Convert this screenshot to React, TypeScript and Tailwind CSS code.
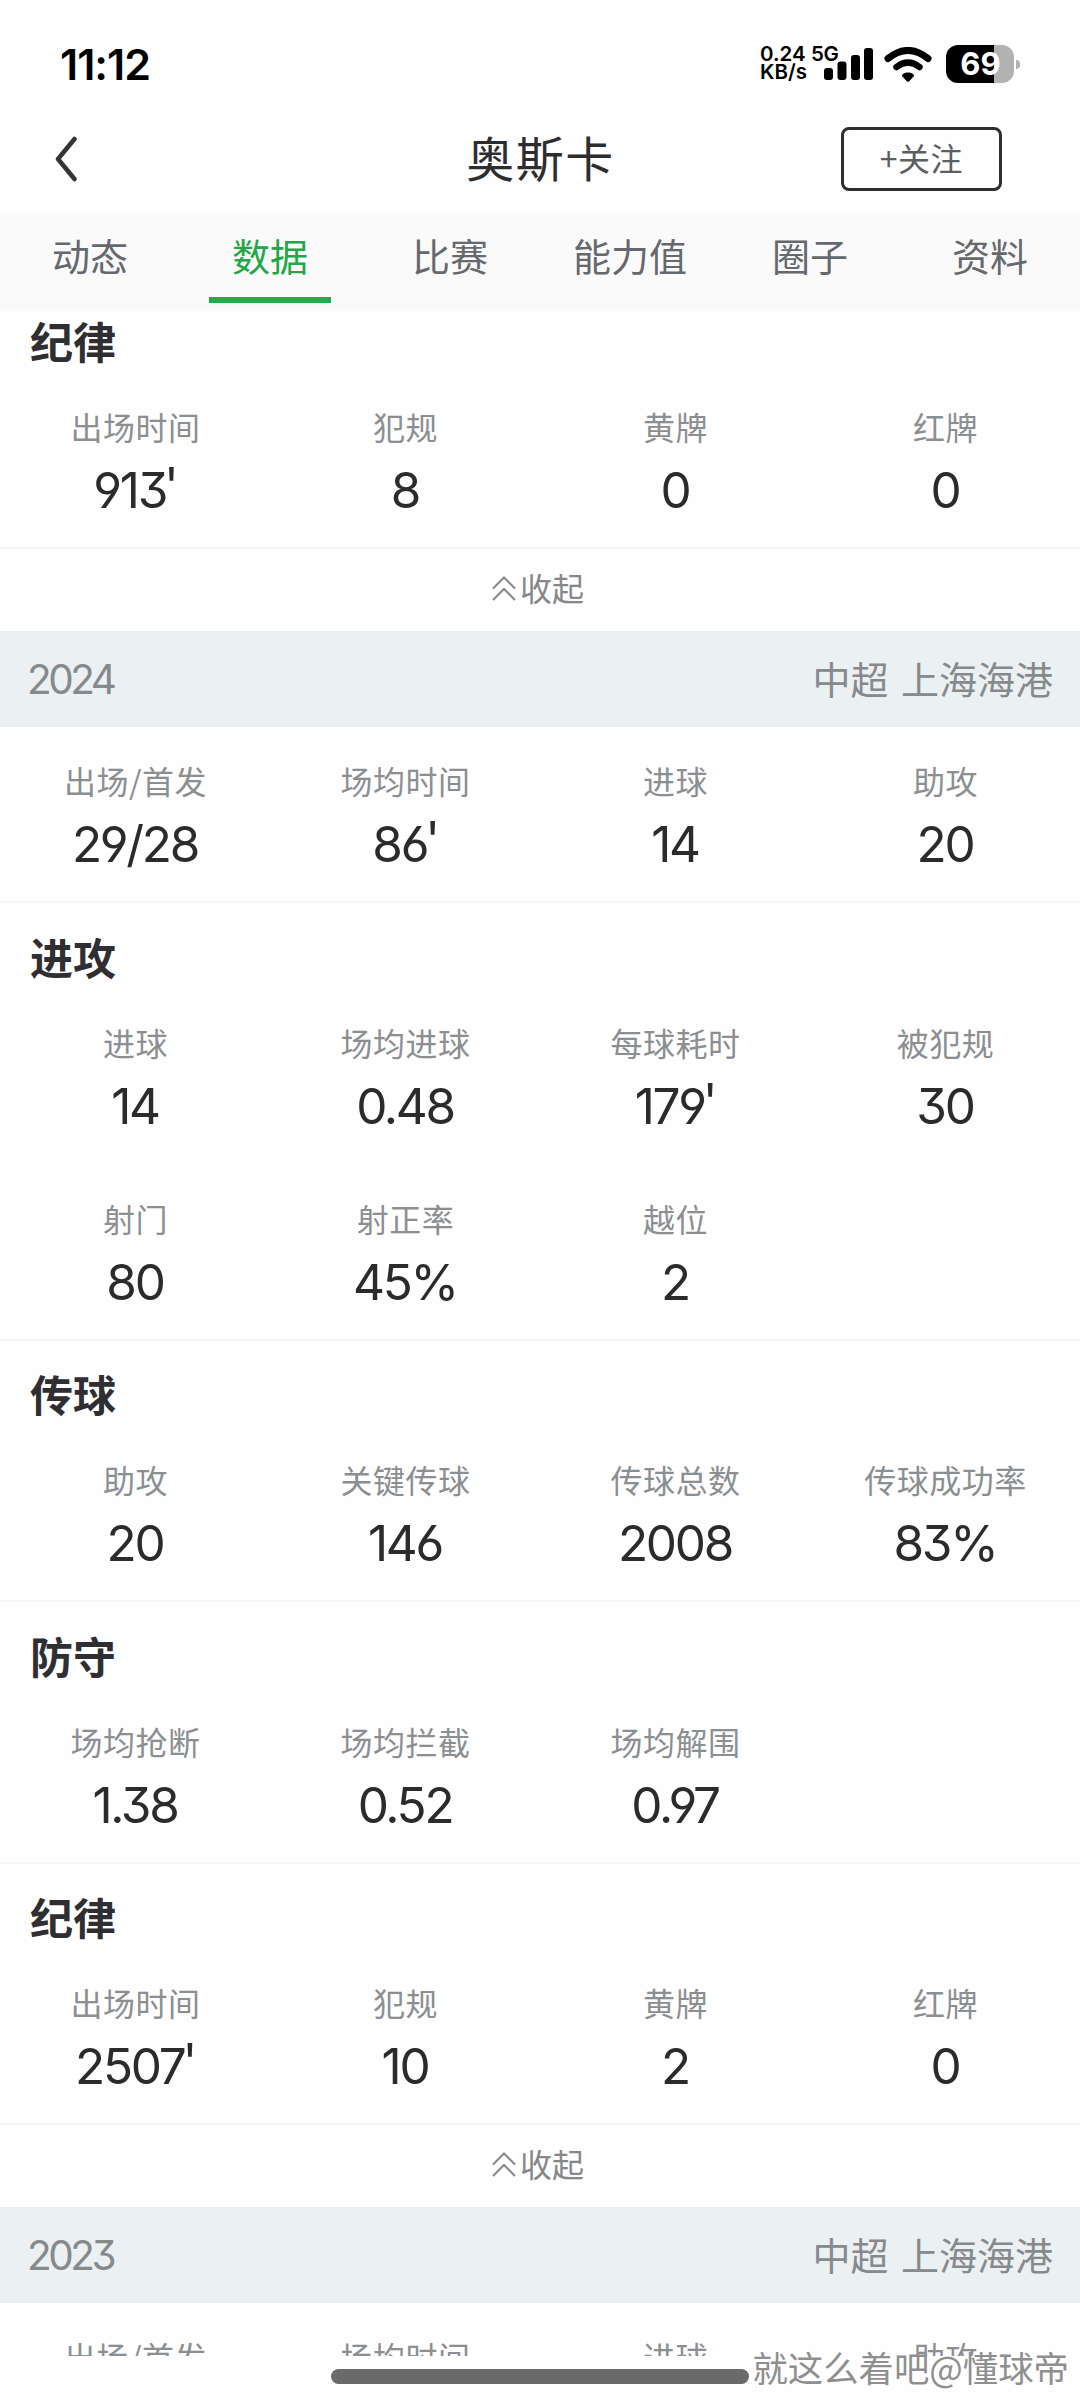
type Stat = { label: string; value: string };
type Section = { title?: string; stats: Stat[] };

const NUM =
  "font-['Inter','Noto_Sans_CJK_SC',sans-serif] [font-feature-settings:'cv03','cv04','cv09']";

const TABS = ["动态", "数据", "比赛", "能力值", "圈子", "资料"];

const PREVIOUS: Section = {
  title: "纪律",
  stats: [
    { label: "出场时间", value: "913'" },
    { label: "犯规", value: "8" },
    { label: "黄牌", value: "0" },
    { label: "红牌", value: "0" },
  ],
};

const SEASON_2024: Section[] = [
  {
    stats: [
      { label: "出场/首发", value: "29/28" },
      { label: "场均时间", value: "86'" },
      { label: "进球", value: "14" },
      { label: "助攻", value: "20" },
    ],
  },
  {
    title: "进攻",
    stats: [
      { label: "进球", value: "14" },
      { label: "场均进球", value: "0.48" },
      { label: "每球耗时", value: "179'" },
      { label: "被犯规", value: "30" },
      { label: "射门", value: "80" },
      { label: "射正率", value: "45%" },
      { label: "越位", value: "2" },
    ],
  },
  {
    title: "传球",
    stats: [
      { label: "助攻", value: "20" },
      { label: "关键传球", value: "146" },
      { label: "传球总数", value: "2008" },
      { label: "传球成功率", value: "83%" },
    ],
  },
  {
    title: "防守",
    stats: [
      { label: "场均抢断", value: "1.38" },
      { label: "场均拦截", value: "0.52" },
      { label: "场均解围", value: "0.97" },
    ],
  },
  {
    title: "纪律",
    stats: [
      { label: "出场时间", value: "2507'" },
      { label: "犯规", value: "10" },
      { label: "黄牌", value: "2" },
      { label: "红牌", value: "0" },
    ],
  },
];

const SEASON_2023: Section = {
  stats: [
    { label: "出场/首发", value: "" },
    { label: "场均时间", value: "" },
    { label: "进球", value: "" },
    { label: "助攻", value: "" },
  ],
};

function StatusBar() {
  return (
    <div className="flex h-[104px] items-start justify-between pl-[60px] pr-[60px] text-black">
      <span className={`${NUM} mt-[38px] text-[43px] leading-[52px] font-semibold tracking-[-1px]`}>11:12</span>
      <div className="mt-[45px] flex items-start">
        <div className="w-[51px] font-['Inter',sans-serif] text-[20.500px] leading-[18px] font-semibold">
          <div>0.24</div>
          <div>KB/s</div>
        </div>
        <span className="w-[28px] font-['Inter',sans-serif] text-[20.500px] leading-[18px] font-semibold tracking-[-0.500px]">5G</span>
        <svg className="-ml-[15px] mt-[3px]" width="49" height="32" viewBox="0 0 49 32">
          <rect x="0" y="20" width="9" height="12" rx="3" />
          <rect x="13.5" y="13.5" width="9" height="18.5" rx="3" />
          <rect x="27" y="7" width="9" height="25" rx="3" />
          <rect x="40" y="0" width="9" height="32" rx="3" />
        </svg>
        <svg className="ml-[11px] mt-[2px]" width="48" height="35" viewBox="0 0 48 35" fill="none" stroke="#000">
          <path d="M4 11.5 Q24 -4.5 44 11.5" strokeWidth="7" strokeLinecap="round" />
          <path d="M12.500 20 Q24 11 35.500 20" strokeWidth="6.500" strokeLinecap="round" />
          <path d="M24 25.500 C27.500 25.500 30.500 27.500 30 29 L25.500 34 Q24 35.500 22.500 34 L18 29 C17.500 27.500 20.500 25.500 24 25.500Z" fill="#000" stroke="none" />
        </svg>
        <div className="ml-[14px] flex h-[38px] w-[68px] items-center justify-center rounded-[12px] bg-[linear-gradient(to_right,#000_70%,#b2b2b2_70%)]">
          <span className="ml-[1px] font-['Inter',sans-serif] text-[31px] leading-[36px] font-bold text-white">69</span>
        </div>
        <div className="mt-[15px] ml-[2px] h-[9px] w-[4px] rounded-r-full bg-[#b2b2b2]" />
      </div>
    </div>
  );
}

function Header() {
  return (
    <div className="flex h-[109px] items-center justify-between pr-[78px] pl-[55px]">
      <svg className="mr-[163px]" width="22" height="46" viewBox="0 0 22 46" fill="none">
        <path d="M19.5 3 L3 23 L19.5 43" stroke="#333436" strokeWidth="4.500" strokeLinecap="round" strokeLinejoin="round" />
      </svg>
      <h1 className="pb-[5px] text-[48px] leading-[64px] tracking-[1.500px] text-[#2d2d30]">奥斯卡</h1>
      <button type="button" className="h-[64px] w-[161px] rounded-[8px] border-3 border-[#2e2e31] pb-[3px] text-[32px] leading-[54px] tracking-[0.500px] text-[#5b5e62]">
        +关注
      </button>
    </div>
  );
}

function Tabs() {
  return (
    <nav className="grid h-[98px] grid-cols-6 bg-[#fafafa] text-[38px] text-[#65686d]">
      {TABS.map((tab) => (
        <div key={tab} className="flex flex-col items-center justify-between pb-[8px]">
          <span className={tab === "数据" ? "mt-[14px] leading-[56px] text-[#22a647]" : "mt-[14px] leading-[56px]"}>{tab}</span>
          {tab === "数据" && <span className="h-[6px] w-[122px] bg-[#26a84b]" />}
        </div>
      ))}
    </nav>
  );
}

function StatValue({ value }: { value: string }) {
  const minutes = value.endsWith("'");
  return (
    <div className={`${NUM} mt-[13px] text-[49.500px] leading-[60px] font-[370] tracking-[-2.300px] text-[#2b2b2d]`}>
      {minutes ? value.slice(0, -1) : value}
      {minutes && <span className="-ml-[2px] align-[5px] leading-none">'</span>}
    </div>
  );
}

function StatSection({ section }: { section: Section }) {
  return (
    <section>
      {section.title && (
        <h2 className="h-[85.500px] pt-[28.500px] pl-[30px] text-[43px] leading-[48px] font-bold text-[#2f2f33]">
          {section.title}
        </h2>
      )}
      <div className="grid auto-rows-[176px] grid-cols-4 text-center">
        {section.stats.map((stat) => (
          <div key={stat.label}>
            <div className="mt-[32px] pl-[1px] text-[32px] leading-[42px] tracking-[0.500px] text-[#8b8f92]">{stat.label}</div>
            <StatValue value={stat.value} />
          </div>
        ))}
      </div>
      <div className="-mt-0.5 h-0.5 bg-[#f6f7f7]" />
    </section>
  );
}

function Collapse() {
  return (
    <div className="flex h-[82px] items-center justify-center gap-[3px] pr-[5px] pb-[4px] text-[32px] text-[#84888b]">
      <svg width="26" height="26" viewBox="0 0 26 26" fill="none" stroke="currentColor" strokeWidth="2">
        <path d="M2 13.5 L13 2.5 L24 13.5 M2 25 L13 14 L24 25" />
      </svg>
      <span className="pb-[3px] leading-[44px]">收起</span>
    </div>
  );
}

function SeasonBar({ year, team }: { year: string; team: string }) {
  return (
    <div className="flex h-[96px] items-center justify-between bg-[#ebf0f3] pr-[27px] pl-[27px] text-[38px] text-[#868a8c]">
      <span className={`${NUM} pt-[2px] text-[40.500px] font-[370] tracking-[-3.500px]`}>{year}</span>
      <span className="pb-[3px] [word-spacing:4px]">{team}</span>
    </div>
  );
}

export default function App() {
  return (
    <div className="relative h-[2400px] w-[1080px] overflow-hidden bg-[#fefefe] font-['Noto_Sans_CJK_SC',sans-serif]">
      <StatusBar />
      <Header />
      <Tabs />
      <main className="h-[2045px] overflow-hidden">
        <div className="-mt-[23.500px]">
          <StatSection section={PREVIOUS} />
          <Collapse />
          <SeasonBar year="2024" team="中超 上海海港" />
          {SEASON_2024.map((section, i) => (
            <StatSection key={i} section={section} />
          ))}
          <Collapse />
          <SeasonBar year="2023" team="中超 上海海港" />
          <StatSection section={SEASON_2023} />
        </div>
      </main>
      <div className="absolute bottom-[16px] left-[331px] h-[15px] w-[418px] rounded-full bg-[#6a6a6a]" />
      <div className="absolute right-[11px] bottom-[7px] text-[35.400px] leading-[52px] whitespace-nowrap text-[#8f8f8f]">
        就这么着吧@懂球帝
      </div>
    </div>
  );
}
